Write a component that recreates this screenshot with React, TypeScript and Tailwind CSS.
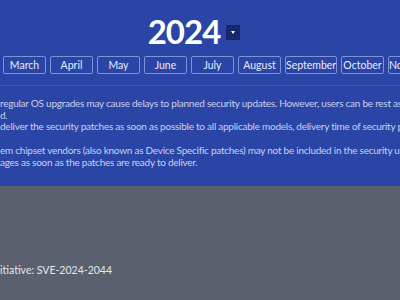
const months = ["February", "March", "April", "May", "June", "July", "August", "September", "October", "November", "December"];

export default function App() {
  return (
    <div className="w-[400px] h-[300px] overflow-hidden bg-[#5b606e] font-['Lato','Noto_Sans',sans-serif]">
      <section className="bg-[#2a45a5] pt-[11px] pb-[17px]">
        {/* Year picker */}
        <div className="flex items-center justify-center gap-[6px] pr-[12px]">
          <h1 className="text-[33px] leading-[40px] font-bold text-white tracking-[-1px]">2024</h1>
          <button className="w-[14px] h-[15px] mt-[2px] bg-[#17276b] flex items-center justify-center">
            <span className="w-0 h-0 border-l-[2.5px] border-r-[2.5px] border-t-[3px] border-l-transparent border-r-transparent border-t-white" />
          </button>
        </div>

        {/* Months */}
        <div className="flex gap-[4px] ml-[-44px] mt-[5px] whitespace-nowrap">
          {months.map((m) => (
            <button
              key={m}
              className={`${m === "September" ? "w-[52px]" : "w-[43px]"} shrink-0 h-[18px] border border-[#7d93d6] rounded-[2px] text-[10.5px] leading-[16px] text-[#e8ecfa] text-center`}
            >
              {m}
            </button>
          ))}
        </div>

        <div className="h-px bg-[#3b56b3] mt-[11px]" />

        {/* Notice */}
        <div className="mt-[12px] text-[10px] leading-[11.7px] text-[#c8d1ef] whitespace-nowrap tracking-[-0.25px]">
          <p>regular OS upgrades may cause delays to planned security updates. However, users can be rest assured</p>
          <p>d.</p>
          <p>deliver the security patches as soon as possible to all applicable models, delivery time of security patches</p>
          <p className="mt-[12px]">em chipset vendors (also known as Device Specific patches) may not be included in the security update</p>
          <p>ages as soon as the patches are ready to deliver.</p>
        </div>
      </section>

      <div className="pt-[77px] text-[10.5px] text-[#e4e6ec] whitespace-nowrap">
        itiative: SVE-2024-2044
      </div>
    </div>
  );
}
